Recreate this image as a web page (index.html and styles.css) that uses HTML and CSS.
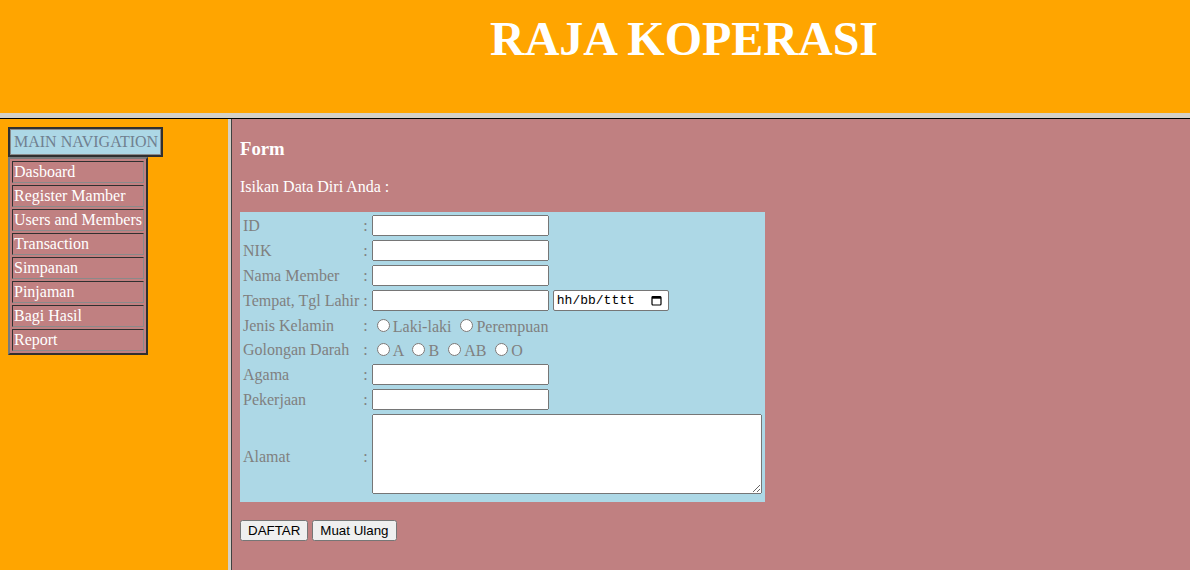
FILE: index.html
```html
<!DOCTYPE html>
<html lang="id">
<head>
  <meta charset="UTF-8" />
  <title>Raja Koperasi</title>
  <link rel="stylesheet" href="styles.css">
</head>
<body>
  <header class="top">
    <h1>RAJA KOPERASI</h1>
  </header>

  <div class="frames">
    <aside class="side">
      <table class="nav-title">
        <tr><td>MAIN NAVIGATION</td></tr>
      </table>
      <table class="nav">
        <tr><td><a href="#">Dasboard</a></td></tr>
        <tr><td><a href="#">Register Mamber</a></td></tr>
        <tr><td><a href="#">Users and Members</a></td></tr>
        <tr><td><a href="#">Transaction</a></td></tr>
        <tr><td><a href="#">Simpanan</a></td></tr>
        <tr><td><a href="#">Pinjaman</a></td></tr>
        <tr><td><a href="#">Bagi Hasil</a></td></tr>
        <tr><td><a href="#">Report</a></td></tr>
      </table>
    </aside>

    <main class="content">
      <h3>Form</h3>
      <p>Isikan Data Diri Anda :</p>
      <form id="memberForm">
        <table class="data">
          <tr>
            <td>ID</td><td class="sep">:</td>
            <td><input type="text" name="id"></td>
          </tr>
          <tr>
            <td>NIK</td><td class="sep">:</td>
            <td><input type="text" name="nik"></td>
          </tr>
          <tr>
            <td>Nama Member</td><td class="sep">:</td>
            <td><input type="text" name="nama"></td>
          </tr>
          <tr>
            <td>Tempat, Tgl Lahir</td><td class="sep">:</td>
            <td>
              <div class="pair">
                <input type="text" name="tempat">
                <span class="date-field">
                  <span>hh/bb/tttt</span>
                  <svg width="11" height="11" viewBox="0 0 11 11">
                    <rect x="1" y="1.5" width="9" height="8.5" rx="1" fill="none" stroke="#000" stroke-width="1.2"/>
                    <rect x="1" y="1.5" width="9" height="2.2" fill="#000"/>
                  </svg>
                </span>
              </div>
            </td>
          </tr>
          <tr class="first-radio">
            <td>Jenis Kelamin</td><td class="sep">:</td>
            <td class="radios">
              <label><input type="radio" name="jk">Laki-laki</label>
              <label><input type="radio" name="jk">Perempuan</label>
            </td>
          </tr>
          <tr>
            <td>Golongan Darah</td><td class="sep">:</td>
            <td class="radios">
              <label><input type="radio" name="gd">A</label>
              <label><input type="radio" name="gd">B</label>
              <label><input type="radio" name="gd">AB</label>
              <label><input type="radio" name="gd">O</label>
            </td>
          </tr>
          <tr>
            <td>Agama</td><td class="sep">:</td>
            <td><input type="text" name="agama"></td>
          </tr>
          <tr>
            <td>Pekerjaan</td><td class="sep">:</td>
            <td><input type="text" name="pekerjaan"></td>
          </tr>
          <tr>
            <td>Alamat</td><td class="sep">:</td>
            <td><textarea name="alamat"></textarea></td>
          </tr>
        </table>
        <div class="actions">
          <button type="submit">DAFTAR</button>
          <button type="reset">Muat Ulang</button>
        </div>
      </form>
    </main>
  </div>
</body>
</html>
```

FILE: styles.css
```css
body {
  margin: 0;
  height: 570px;
  overflow: hidden;
  font-family: "Liberation Serif", "Times New Roman", serif;
  font-size: 16px;
  background: #ffa500;
  display: flex;
  flex-direction: column;
}

/* top frame */
.top {
  height: 113px;
  flex: none;
  background: #ffa500;
  border-bottom: 5px solid #d4d0c8;
}
.top h1 {
  margin: 0;
  padding: 11px 0 0 178px;
  text-align: center;
  font-size: 48px;
  font-weight: bold;
  color: #fff;
}

.frames {
  flex: 1;
  display: flex;
  border-top: 1px solid #000;
  min-height: 0;
}

/* left frame */
.side {
  width: 220px;
  flex: none;
  padding: 8px 0 0 8px;
  background: #ffa500;
  border-right: 3px solid #d4d0c8;
}
.side table {
  border-collapse: separate;
}
.nav-title {
  border: 2px solid #303030;
  border-spacing: 0;
  background: #add8e6;
}
.nav-title td {
  border: 1px solid #8a8a8a;
  padding: 3px 2px 3px 3px;
  color: #708090;
}
.nav {
  border: 2px solid;
  border-color: #7a7a7a #303030 #303030 #7a7a7a;
  border-spacing: 2px;
  background: #c08081;
}
.nav td {
  border: 1px solid;
  border-color: #303030 #8a8a8a #8a8a8a #303030;
  padding: 1px;
  background: #c08081;
}
.nav a {
  color: #fff;
  text-decoration: none;
}

/* main frame */
.content {
  flex: 1;
  padding: 0 8px;
  background: #c08081;
  border-left: 1px solid #404040;
  color: #fff;
}
.content h3 {
  font-size: 18.72px;
  margin: 18.72px 0;
}
.content p {
  margin: 16px 0;
}

.data {
  border-collapse: separate;
  border-spacing: 2px;
  background: #add8e6;
  color: #808080;
}
.data td {
  padding: 1px;
}
.data .first-radio td {
  padding-top: 2px;
}
.data input[type="text"],
.data textarea {
  display: block;
  box-sizing: border-box;
  width: 177px;
  height: 21px;
  margin: 0;
  font-family: "Liberation Sans", Arial, sans-serif;
  font-size: 13.33px;
}
.data textarea {
  width: 390px;
  height: 80px;
  margin-bottom: 5px;
  resize: both;
}
.pair {
  display: flex;
  gap: 4px;
}
.date-field {
  box-sizing: border-box;
  width: 116px;
  height: 21px;
  display: flex;
  align-items: center;
  justify-content: space-between;
  padding: 0 6px 0 3px;
  background: #fff;
  border: 1px solid #767676;
  border-radius: 2px;
  font-family: "Liberation Mono", "Courier New", monospace;
  font-size: 13px;
  color: #000;
}
.radios input {
  margin: 3px 3px 0 5px;
}

.actions {
  margin-top: 18px;
}
.actions button {
  font-family: "Liberation Sans", Arial, sans-serif;
  font-size: 13.33px;
  height: 21px;
  padding: 1px 6px;
  margin: 0;
}
```
